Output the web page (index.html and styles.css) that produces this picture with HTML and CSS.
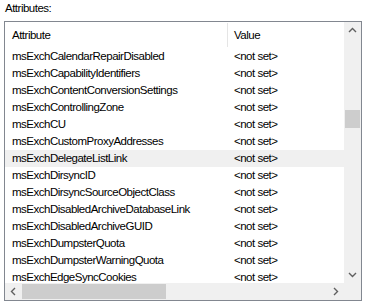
FILE: index.html
```html
<!DOCTYPE html>
<html lang="en">

<head>
    <meta charset="UTF-8">
    <title>Attributes</title>
    <link rel="stylesheet" href="styles.css">
</head>

<body>
    <p class="label">Attributes:</p>
    <div class="box">
        <div class="list">
            <div class="header">
                <div class="col-name">Attribute</div>
                <div class="col-value">Value</div>
            </div>
            <div class="rows">
                <div class="row"><span class="name">msExchCalendarRepairDisabled</span><span class="value">&lt;not set&gt;</span></div>
                <div class="row"><span class="name">msExchCapabilityIdentifiers</span><span class="value">&lt;not set&gt;</span></div>
                <div class="row"><span class="name">msExchContentConversionSettings</span><span class="value">&lt;not set&gt;</span></div>
                <div class="row"><span class="name">msExchControllingZone</span><span class="value">&lt;not set&gt;</span></div>
                <div class="row"><span class="name">msExchCU</span><span class="value">&lt;not set&gt;</span></div>
                <div class="row"><span class="name">msExchCustomProxyAddresses</span><span class="value">&lt;not set&gt;</span></div>
                <div class="row hover"><span class="name">msExchDelegateListLink</span><span class="value">&lt;not set&gt;</span></div>
                <div class="row"><span class="name">msExchDirsyncID</span><span class="value">&lt;not set&gt;</span></div>
                <div class="row"><span class="name">msExchDirsyncSourceObjectClass</span><span class="value">&lt;not set&gt;</span></div>
                <div class="row"><span class="name">msExchDisabledArchiveDatabaseLink</span><span class="value">&lt;not set&gt;</span></div>
                <div class="row"><span class="name">msExchDisabledArchiveGUID</span><span class="value">&lt;not set&gt;</span></div>
                <div class="row"><span class="name">msExchDumpsterQuota</span><span class="value">&lt;not set&gt;</span></div>
                <div class="row"><span class="name">msExchDumpsterWarningQuota</span><span class="value">&lt;not set&gt;</span></div>
                <div class="row"><span class="name">msExchEdgeSyncCookies</span><span class="value">&lt;not set&gt;</span></div>
            </div>
        </div>
        <div class="vscroll">
            <svg class="arrow" width="17" height="17" viewBox="0 0 17 17"><path d="M5 10 L8.5 6.5 L12 10" fill="none" stroke="#606060" stroke-width="1.4"/></svg>
            <div class="vtrack"><div class="vthumb"></div></div>
            <svg class="arrow" width="17" height="17" viewBox="0 0 17 17"><path d="M5 7 L8.5 10.5 L12 7" fill="none" stroke="#606060" stroke-width="1.4"/></svg>
        </div>
        <div class="hscroll">
            <svg class="arrow" width="17" height="17" viewBox="0 0 17 17"><path d="M10 5 L6.5 8.5 L10 12" fill="none" stroke="#606060" stroke-width="1.4"/></svg>
            <div class="htrack"><div class="hthumb"></div></div>
            <svg class="arrow" width="17" height="17" viewBox="0 0 17 17"><path d="M7 5 L10.5 8.5 L7 12" fill="none" stroke="#606060" stroke-width="1.4"/></svg>
        </div>
        <div class="corner"></div>
    </div>
</body>

</html>
```

FILE: styles.css
```css
* {
    margin: 0;
    padding: 0;
    box-sizing: border-box;
}

body {
    width: 368px;
    height: 304px;
    background: #fff;
    font-family: "Liberation Sans", Arial, sans-serif;
    font-size: 11.5px;
    letter-spacing: -0.5px;
    color: #000;
    padding: 1px 0 0 4px;
    overflow: hidden;
}

.label {
    height: 15px;
    line-height: 15px;
    padding-left: 1px;
    margin-bottom: 5px;
}

.box {
    width: 358px;
    height: 280px;
    border: 1px solid #828790;
    display: grid;
    grid-template-columns: 339px 17px;
    grid-template-rows: 261px 17px;
    overflow: hidden;
}

.list {
    overflow: hidden;
}

.header {
    display: flex;
    height: 26px;
    align-items: center;
}

.col-name {
    width: 222px;
    padding-left: 7px;
}

.col-value {
    flex: 1;
    height: 24px;
    display: flex;
    align-items: center;
    border-left: 1px solid #e5e5e5;
    padding-left: 6px;
}

.row {
    display: flex;
    height: 17px;
    line-height: 17px;
}

.row.hover {
    background: #f0f0f0;
}

.name {
    width: 222px;
    padding-left: 7px;
    white-space: nowrap;
    overflow: hidden;
}

.value {
    padding-left: 7px;
}

.vscroll {
    background: #f0f0f0;
    display: flex;
    flex-direction: column;
}

.vtrack {
    flex: 1;
    position: relative;
}

.vthumb {
    position: absolute;
    left: 1px;
    right: 1px;
    top: 71px;
    height: 18px;
    background: #cdcdcd;
}

.hscroll {
    background: #f0f0f0;
    display: flex;
}

.htrack {
    flex: 1;
    position: relative;
}

.hthumb {
    position: absolute;
    top: 1px;
    bottom: 1px;
    left: 0;
    width: 144px;
    background: #cdcdcd;
}

.arrow {
    display: block;
    flex: none;
}

.corner {
    background: #f0f0f0;
}
```
